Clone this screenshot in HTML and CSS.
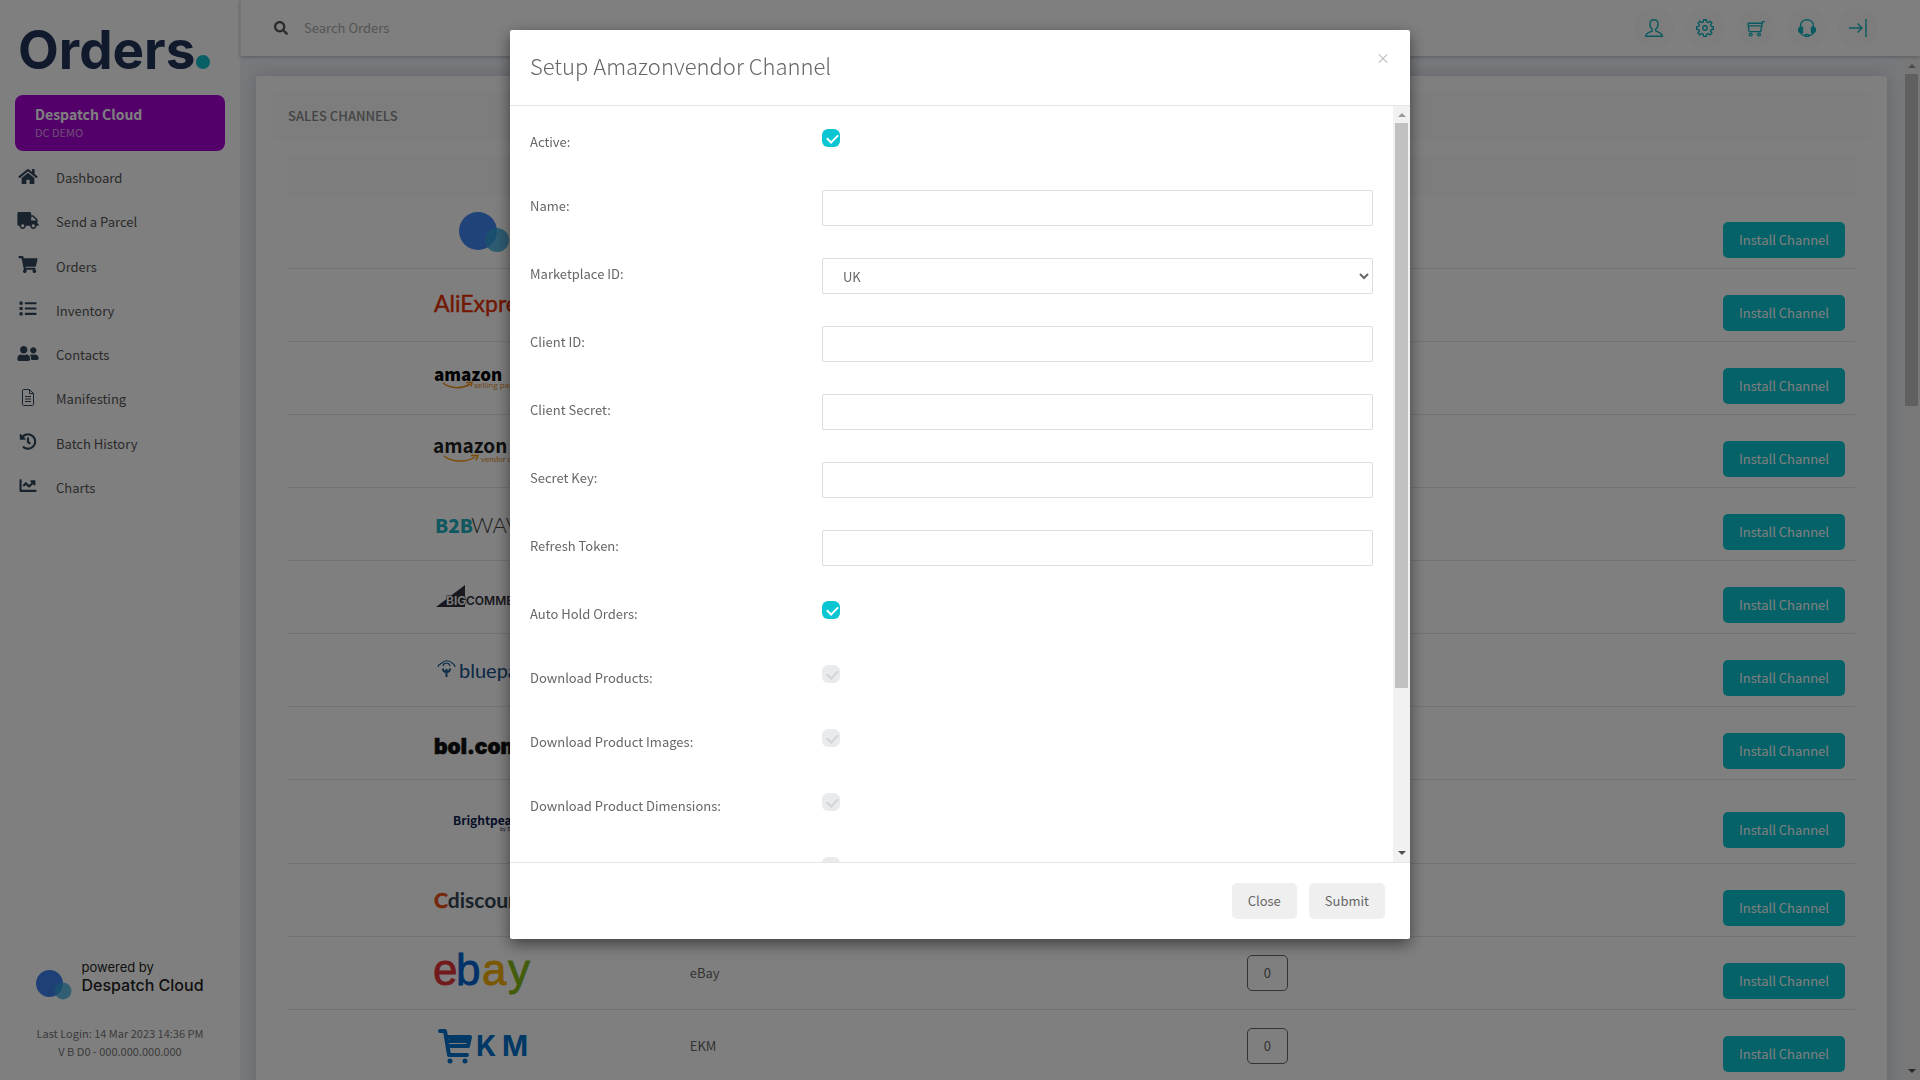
FILE: index.html
```html
<!DOCTYPE html>
<html lang="en">
<head>
  <meta charset="UTF-8">
  <meta name="viewport" content="width=device-width, initial-scale=1.0">
  <title>Sales Channels</title>
  <link rel="stylesheet" href="styles.css">
</head>
<body>
  <div class="app">

    <!-- Sidebar -->
    <aside class="sidebar">
      <div class="brand">Orders<span class="brand-dot"></span></div>
      <div class="company">
        <strong>Despatch Cloud</strong>
        <span>DC DEMO</span>
      </div>
      <nav class="menu">
        <a href="#"><svg viewBox="0 0 576 512"><path d="M280.37 148.26L96 300.11V464a16 16 0 0 0 16 16l112.06-.29a16 16 0 0 0 15.92-16V368a16 16 0 0 1 16-16h64a16 16 0 0 1 16 16v95.64a16 16 0 0 0 16 16.05L464 480a16 16 0 0 0 16-16V300L295.67 148.26a12.19 12.19 0 0 0-15.3 0zM571.6 251.47L488 182.56V44.05a12 12 0 0 0-12-12h-56a12 12 0 0 0-12 12v72.61L318.47 43a48 48 0 0 0-61 0L4.34 251.47a12 12 0 0 0-1.6 16.9l25.5 31A12 12 0 0 0 45.15 301l235.22-193.74a12.19 12.19 0 0 1 15.3 0L530.9 301a12 12 0 0 0 16.9-1.6l25.5-31a12 12 0 0 0-1.7-16.93z"/></svg>Dashboard</a>
        <a href="#"><svg viewBox="0 0 640 512"><path d="M624 352h-16V243.9c0-12.7-5.1-24.9-14.1-33.9L494 110.1c-9-9-21.2-14.1-33.9-14.1H416V48c0-26.5-21.5-48-48-48H48C21.5 0 0 21.5 0 48v320c0 26.5 21.5 48 48 48h16c0 53 43 96 96 96s96-43 96-96h128c0 53 43 96 96 96s96-43 96-96h48c8.8 0 16-7.2 16-16v-32c0-8.8-7.2-16-16-16zM160 464c-26.5 0-48-21.5-48-48s21.5-48 48-48 48 21.5 48 48-21.5 48-48 48zm320 0c-26.5 0-48-21.5-48-48s21.5-48 48-48 48 21.5 48 48-21.5 48-48 48zm80-208H416V144h44.1l99.9 99.9V256z"/></svg>Send a Parcel</a>
        <a href="#"><svg viewBox="0 0 576 512"><path d="M528.12 301.319l47.273-208C578.806 78.301 567.391 64 551.99 64H159.208l-9.166-44.81C147.758 8.021 137.93 0 126.529 0H24C10.745 0 0 10.745 0 24v16c0 13.255 10.745 24 24 24h69.883l70.248 343.435C147.325 417.1 136 435.222 136 456c0 30.928 25.072 56 56 56s56-25.072 56-56c0-15.674-6.447-29.835-16.824-40h209.647C430.447 426.165 424 440.326 424 456c0 30.928 25.072 56 56 56s56-25.072 56-56c0-22.172-12.888-41.332-31.579-50.405l5.517-24.276c3.413-15.018-8.002-29.319-23.403-29.319H218.117l-6.545-32h293.145c11.206 0 20.92-7.754 23.403-18.681z"/></svg>Orders</a>
        <a href="#"><svg viewBox="0 0 512 512"><path d="M16 48h64a16 16 0 0 1 16 16v64a16 16 0 0 1-16 16H16a16 16 0 0 1-16-16V64a16 16 0 0 1 16-16zm0 160h64a16 16 0 0 1 16 16v64a16 16 0 0 1-16 16H16a16 16 0 0 1-16-16v-64a16 16 0 0 1 16-16zm0 160h64a16 16 0 0 1 16 16v64a16 16 0 0 1-16 16H16a16 16 0 0 1-16-16v-64a16 16 0 0 1 16-16zM176 64h320a16 16 0 0 1 16 16v32a16 16 0 0 1-16 16H176a16 16 0 0 1-16-16V80a16 16 0 0 1 16-16zm0 160h320a16 16 0 0 1 16 16v32a16 16 0 0 1-16 16H176a16 16 0 0 1-16-16v-32a16 16 0 0 1 16-16zm0 160h320a16 16 0 0 1 16 16v32a16 16 0 0 1-16 16H176a16 16 0 0 1-16-16v-32a16 16 0 0 1 16-16z"/></svg>Inventory</a>
        <a href="#"><svg viewBox="0 0 640 512"><path d="M192 256c61.9 0 112-50.1 112-112S253.9 32 192 32 80 82.1 80 144s50.1 112 112 112zm76.8 32h-8.3c-20.8 10-43.9 16-68.5 16s-47.6-6-68.5-16h-8.3C51.6 288 0 339.6 0 403.2V432c0 26.5 21.5 48 48 48h288c26.5 0 48-21.5 48-48v-28.8c0-63.6-51.6-115.2-115.2-115.2zM480 256c53 0 96-43 96-96s-43-96-96-96-96 43-96 96 43 96 96 96zm48 32h-3.8c-13.9 4.8-28.6 8-44.2 8s-30.3-3.2-44.2-8H432c-20.4 0-39.2 5.9-55.7 15.4 24.4 26.3 39.7 61.2 39.7 99.8v38.4c0 2.2-.5 4.3-.6 6.4H592c26.5 0 48-21.5 48-48 0-61.9-50.1-112-112-112z"/></svg>Contacts</a>
        <a href="#"><svg viewBox="0 0 17 17"><path class="line" d="M4 .5h6l4 4V15.500a1 1 0 0 1-1 1H4a1 1 0 0 1-1-1V1.500a1 1 0 0 1 1-1zM10 .5v4h4M5.500 7.500h6M5.500 10h6M5.500 12.500h6"/></svg>Manifesting</a>
        <a href="#"><svg viewBox="0 0 512 512"><path d="M504 255.531c.253 136.64-111.18 248.372-247.82 248.468-59.015.042-113.223-20.53-155.822-54.911-11.077-8.94-11.905-25.541-1.839-35.607l11.267-11.267c8.609-8.609 22.353-9.551 31.891-1.984C173.062 425.135 212.781 440 256 440c101.705 0 184-82.311 184-184 0-101.705-82.311-184-184-184-48.814 0-93.149 18.969-126.068 49.932l50.754 50.754c10.08 10.08 2.941 27.314-11.313 27.314H24c-8.837 0-16-7.163-16-16V38.627c0-14.254 17.234-21.393 27.314-11.314l49.372 49.372C129.209 34.136 189.552 8 256 8c136.81 0 247.747 110.78 248 247.531zm-180.912 78.784l9.823-12.63c8.138-10.463 6.253-25.542-4.21-33.679L288 256.349V152c0-13.255-10.745-24-24-24h-16c-13.255 0-24 10.745-24 24v135.651l65.409 50.874c10.463 8.137 25.541 6.253 33.679-4.21z"/></svg>Batch History</a>
        <a href="#"><svg viewBox="0 0 512 512"><path d="M496 384H64V80c0-8.84-7.16-16-16-16H16C7.16 64 0 71.16 0 80v336c0 17.67 14.33 32 32 32h464c8.84 0 16-7.16 16-16v-32c0-8.84-7.16-16-16-16zM464 96H345.94c-21.38 0-32.09 25.85-16.97 40.97l32.4 32.4L288 242.75l-73.37-73.37c-12.5-12.5-32.76-12.5-45.25 0l-68.69 68.69c-6.25 6.25-6.25 16.38 0 22.63l22.62 22.62c6.25 6.25 16.38 6.25 22.63 0L192 237.25l73.37 73.37c12.5 12.5 32.76 12.5 45.25 0l96-96 32.4 32.4c15.12 15.12 40.97 4.41 40.97-16.97V112c.01-8.84-7.15-16-15.99-16z"/></svg>Charts</a>
      </nav>
      <div class="sidebar-footer">
        <div class="powered">
          <svg width="36" height="30" viewBox="0 0 36 30"><circle cx="13.500" cy="13.500" r="13.500" fill="#3f80ec"/><circle cx="27" cy="21" r="8.500" fill="#32a5dc" fill-opacity=".75"/></svg>
          <div class="powered-text"><span>powered by</span><b>Despatch Cloud</b></div>
        </div>
        <p>Last Login: 14 Mar 2023 14:36 PM</p>
        <p>V B D0 - 000.000.000.000</p>
      </div>
    </aside>

    <div class="page">

      <!-- Top bar -->
      <header class="topbar">
        <label class="search">
          <svg width="14" height="14" viewBox="0 0 512 512"><path d="M505 442.7L405.3 343c-4.5-4.5-10.6-7-17-7H372c27.6-35.3 44-79.7 44-128C416 93.1 322.9 0 208 0S0 93.1 0 208s93.1 208 208 208c48.3 0 92.700-16.4 128-44v16.3c0 6.4 2.5 12.5 7 17l99.7 99.7c9.4 9.4 24.6 9.4 33.9 0l28.3-28.3c9.4-9.4 9.4-24.6.1-34zM208 336c-70.7 0-128-57.2-128-128 0-70.7 57.2-128 128-128 70.7 0 128 57.2 128 128 0 70.7-57.2 128-128 128z"/></svg>
          <input type="text" placeholder="Search Orders" aria-label="Search Orders">
        </label>
        <div class="top-icons">
          <a href="#" aria-label="Account"><svg viewBox="0 0 18 18"><path d="M9 .7c-2.500 0-4 1.700-4 4.200 0 2.300 1 4.400 2.300 5.200v1.700c-1 1.200-6.600 1.500-6.600 5.500h16.600c0-4-5.600-4.300-6.600-5.500v-1.700c1.300-.8 2.300-2.900 2.300-5.200 0-2.500-1.500-4.200-4-4.200z"/></svg></a>
          <a href="#" aria-label="Settings"><svg viewBox="0 0 18 18"><path d="M7.700.7h2.600l.4 2.200 1.500.6 1.900-1.300 1.800 1.800-1.300 1.900.6 1.500 2.200.4v2.500l-2.200.4-.6 1.500 1.300 1.900-1.800 1.800-1.900-1.300-1.500.6-.4 2.200H7.700l-.4-2.200-1.500-.6-1.900 1.300-1.800-1.800 1.300-1.900-.6-1.500-2.200-.4V7.800l2.200-.4.6-1.500-1.300-1.900 1.800-1.800 1.900 1.300 1.500-.6z"/><circle cx="9" cy="9" r="2.200"/></svg></a>
          <a href="#" aria-label="Basket"><svg viewBox="0 0 18 18"><path d="M18 2.600h-2.500l-1.800 10H2.700M.7 4.300h14.200M.9 4.300l1.200 8.300M1.500 6.900h13"/><circle cx="3.700" cy="15.500" r="1.400"/><circle cx="12" cy="15.500" r="1.400"/></svg></a>
          <a href="#" aria-label="Support"><svg viewBox="0 0 18 18"><path d="M2.600 8V6.500c0-3.400 2.900-5.800 6.400-5.800s6.400 2.400 6.400 5.800V8M2.600 13c.3 2.400 2 3.500 4.400 3.500M15.400 13c-.3 2.400-2 3.500-4.400 3.500"/><path class="solid" d="M2.600 8.200l1.900.2v5.200l-1.900.2C1 13.300.5 12 .5 11s.6-2.300 2.100-2.800zM15.400 8.200l-1.900.2v5.200l1.900.2c1.600-.5 2.100-1.800 2.100-2.800s-.6-2.300-2.100-2.800z"/><rect x="7" y="15.500" width="4" height="2" rx="1"/></svg></a>
          <a href="#" aria-label="Log out"><svg viewBox="0 0 18 18"><path d="M0 9h13M8.500 4.500L13 9l-4.500 4.500M17 0v18"/></svg></a>
        </div>
      </header>

      <div class="page-body">
        <main class="content">
          <div class="card">
            <h2 class="card-title">SALES CHANNELS</h2>
            <table class="channels">
              <thead>
                <tr><th></th><th></th><th></th><th></th></tr>
              </thead>
              <tbody>
                <tr>
                  <td class="logo"><svg width="100" height="40"><circle cx="44" cy="19" r="19" fill="#4189f5"/><circle cx="63" cy="28" r="12" fill="#32a5dc" fill-opacity=".8"/></svg></td>
                  <td>Despatch Cloud</td>
                  <td class="count"><button>0</button></td>
                  <td class="action"><button class="btn-install">Install Channel</button></td>
                </tr>
                <tr>
                  <td class="logo"><svg width="100" height="40"><text x="0" y="27" font-family="Lato" font-size="23" font-weight="400" fill="#e62e04" stroke="#e62e04" stroke-width=".4">AliExpress</text></svg></td>
                  <td>AliExpress</td>
                  <td class="count"><button>0</button></td>
                  <td class="action"><button class="btn-install">Install Channel</button></td>
                </tr>
                <tr>
                  <td class="logo"><svg width="100" height="40"><text x="0" y="23" font-family="Noto Sans CJK SC" font-size="17" font-weight="900" fill="#000">amazon</text><path d="M9 25c8 6 19 6 27 1M32 24.500h6l-1 4" fill="none" stroke="#f08c10" stroke-width="1.500"/><text x="40" y="30" font-family="Open Sans" font-size="8" fill="#e08a1c">selling partner</text></svg></td>
                  <td>Amazon</td>
                  <td class="count"><button>0</button></td>
                  <td class="action"><button class="btn-install">Install Channel</button></td>
                </tr>
                <tr>
                  <td class="logo"><svg width="100" height="40"><text x="-1" y="22" font-family="Noto Sans CJK SC" font-size="19" font-weight="700" fill="#221f1f">amazon</text><path d="M10 25c8 6 22 7 31 1M37 24.500h7l-2 5" fill="none" stroke="#f79400" stroke-width="1.500"/><text x="47" y="31" font-family="Lato" font-size="8" fill="#e08a1c">vendor central</text></svg></td>
                  <td>Amazon Vendor</td>
                  <td class="count"><button>0</button></td>
                  <td class="action"><button class="btn-install">Install Channel</button></td>
                </tr>
                <tr>
                  <td class="logo"><svg width="100" height="40"><text x="1" y="29" font-family="Noto Sans CJK SC" font-size="19" font-weight="900" fill="#1fb0c0">B2B</text><text x="37" y="29" font-family="Lato" font-size="22" font-weight="300" fill="#444">WAVE</text></svg></td>
                  <td>B2B Wave</td>
                  <td class="count"><button>0</button></td>
                  <td class="action"><button class="btn-install">Install Channel</button></td>
                </tr>
                <tr>
                  <td class="logo"><svg width="100" height="40"><path d="M2 30L31 8v22z" fill="#34313f"/><text x="12" y="28" font-family="Inter" font-size="12" font-weight="600" fill="#fff" stroke="#34313f" stroke-width="1" paint-order="stroke">BIG</text><text x="32" y="28" font-family="Inter" font-size="12" font-weight="600" fill="#34313f">COMMERCE</text></svg></td>
                  <td>BigCommerce</td>
                  <td class="count"><button>0</button></td>
                  <td class="action"><button class="btn-install">Install Channel</button></td>
                </tr>
                <tr>
                  <td class="logo"><svg width="100" height="40"><path d="M4 17c0-3 3-3 4-4 2-3 8-3 10 0 1 1 3 1 3 4M9 16c1-4 6-4 7 0" fill="none" stroke="#1c5a92" stroke-width="1.200"/><path d="M12.500 27v-8M9 18.500c0 3 1.500 3.500 3.500 3.500s3.500-.5 3.500-3.500" fill="none" stroke="#1c5a92" stroke-width="2"/><text x="25" y="28" font-family="Lato" font-size="20" fill="#15508c">bluepark</text></svg></td>
                  <td>Bluepark</td>
                  <td class="count"><button>0</button></td>
                  <td class="action"><button class="btn-install">Install Channel</button></td>
                </tr>
                <tr>
                  <td class="logo"><svg width="100" height="40"><text x="0" y="31" font-family="Inter" font-size="21" font-weight="900" fill="#111" stroke="#111" stroke-width=".6">bol.com</text></svg></td>
                  <td>Bol.com</td>
                  <td class="count"><button>0</button></td>
                  <td class="action"><button class="btn-install">Install Channel</button></td>
                </tr>
                <tr class="tall">
                  <td class="logo"><svg width="100" height="40"><text x="19" y="23" font-family="Noto Sans CJK SC" font-size="12" font-weight="700" fill="#0c1c52">Brightpearl</text><text x="66" y="29" font-family="Inter" font-size="5" fill="#0c1c52">by Sage</text></svg></td>
                  <td>Brightpearl</td>
                  <td class="count"><button>0</button></td>
                  <td class="action"><button class="btn-install">Install Channel</button></td>
                </tr>
                <tr>
                  <td class="logo"><svg width="100" height="40"><text x="0" y="28" font-family="Lato" font-size="21" font-weight="700" fill="#344656"><tspan fill="#ec4e14" stroke="#ec4e14" stroke-width=".6">C</tspan>discount</text></svg></td>
                  <td>Cdiscount</td>
                  <td class="count"><button>0</button></td>
                  <td class="action"><button class="btn-install">Install Channel</button></td>
                </tr>
                <tr>
                  <td class="logo"><svg width="100" height="40"><text y="32" font-family="Liberation Sans" font-size="44" stroke-width=".8"><tspan x="-1" fill="#e53238" stroke="#e53238">e</tspan><tspan x="22" fill="#0064d2" stroke="#0064d2">b</tspan><tspan x="48" fill="#f5af02" stroke="#f5af02">a</tspan><tspan x="74" fill="#86b817" stroke="#86b817">y</tspan></text></svg></td>
                  <td>eBay</td>
                  <td class="count"><button>0</button></td>
                  <td class="action"><button class="btn-install">Install Channel</button></td>
                </tr>
                <tr>
                  <td class="logo"><svg width="100" height="40"><path d="M6 5h5l4 24h18M13 11h23l-2 9H14M16 15h18" fill="none" stroke="#0070cc" stroke-width="4" stroke-linecap="round" stroke-linejoin="round"/><circle cx="16" cy="35" r="2.500" fill="#0070cc"/><circle cx="31" cy="35" r="2.500" fill="#0070cc"/><text y="30" font-family="Inter" font-size="28" font-weight="700" fill="#0070cc"><tspan x="42">K</tspan><tspan x="68">M</tspan></text></svg></td>
                  <td>EKM</td>
                  <td class="count"><button>0</button></td>
                  <td class="action"><button class="btn-install">Install Channel</button></td>
                </tr>
              </tbody>
            </table>
          </div>
        </main>
        <div class="scrollbar"><i class="up"></i><span class="thumb thumb-page"></span><i class="down"></i></div>
      </div>
    </div>
  </div>

  <!-- Channel setup modal -->
  <div class="backdrop">
    <form class="modal" role="dialog" aria-labelledby="modal-title">
      <div class="modal-header">
        <h1 id="modal-title">Setup Amazonvendor Channel</h1>
        <button type="button" class="close" aria-label="Close dialog">&times;</button>
      </div>
      <div class="modal-body">
        <div class="fields">
          <div class="field check"><label for="active">Active:</label><input type="checkbox" id="active" checked></div>
          <div class="field"><label for="name">Name:</label><input type="text" id="name"></div>
          <div class="field"><label for="marketplace">Marketplace ID:</label><select id="marketplace"><option>UK</option><option>DE</option><option>FR</option></select></div>
          <div class="field"><label for="client-id">Client ID:</label><input type="text" id="client-id"></div>
          <div class="field"><label for="client-secret">Client Secret:</label><input type="text" id="client-secret"></div>
          <div class="field"><label for="secret-key">Secret Key:</label><input type="text" id="secret-key"></div>
          <div class="field"><label for="refresh-token">Refresh Token:</label><input type="text" id="refresh-token"></div>
          <div class="field check"><label for="auto-hold">Auto Hold Orders:</label><input type="checkbox" id="auto-hold" checked></div>
          <div class="field check"><label for="products">Download Products:</label><input type="checkbox" id="products"></div>
          <div class="field check"><label for="images">Download Product Images:</label><input type="checkbox" id="images"></div>
          <div class="field check"><label for="dimensions">Download Product Dimensions:</label><input type="checkbox" id="dimensions"></div>
          <div class="field check"><span></span><input type="checkbox" aria-label="Download Product Weights"></div>
        </div>
        <div class="scrollbar"><i class="up"></i><span class="thumb thumb-modal"></span><i class="down"></i></div>
      </div>
      <div class="modal-footer">
        <button type="button">Close</button>
        <button type="submit">Submit</button>
      </div>
    </form>
  </div>
</body>
</html>
```
FILE: styles.css
```css
* {
  box-sizing: border-box;
}

body {
  margin: 0;
  font-family: "Noto Sans CJK SC", "Noto Sans", sans-serif;
  font-size: 13px;
  line-height: 20px;
  color: #666;
  overflow: hidden;
}

button, input, select {
  font: inherit;
  color: inherit;
}

a {
  color: inherit;
  text-decoration: none;
}

.app {
  display: flex;
  height: 100vh;
}

/* Sidebar */
.sidebar {
  width: 240px;
  flex: none;
  display: flex;
  flex-direction: column;
  background: #fff;
  color: #555;
}

.brand {
  display: flex;
  align-items: baseline;
  height: 95px;
  padding: 20px 0 0 18px;
  font-family: Inter, sans-serif;
  font-size: 53px;
  font-weight: 700;
  line-height: 60px;
  color: #22355a;
}

.brand-dot {
  width: 14px;
  height: 14px;
  margin-left: 1px;
  border-radius: 50%;
  background: #0cc0cc;
}

.company {
  display: flex;
  flex-direction: column;
  height: 56px;
  margin: 0 15px;
  padding: 9px 20px;
  border-radius: 8px;
  background: #a800d6;
  color: #fff;
}

.company strong {
  font-size: 14px;
}

.company span {
  font-size: 11px;
  line-height: 16px;
  opacity: .6;
}

.menu {
  display: grid;
  grid-auto-rows: 1fr;
  height: 354px;
  margin-top: 5px;
}

.menu a {
  display: flex;
  align-items: center;
}

.menu svg {
  width: 56px;
  height: 17px;
  margin-bottom: 4px;
  fill: #30475a;
}

.menu .line {
  fill: none;
  stroke: #30475a;
}

.sidebar-footer {
  margin-top: auto;
  padding-bottom: 20px;
  text-align: center;
  font-size: 11px;
  line-height: 18px;
  color: #777;
}

.sidebar-footer p {
  margin: 0;
}

.powered {
  display: flex;
  align-items: flex-end;
  justify-content: center;
  gap: 9px;
  margin-bottom: 24px;
}

.powered-text {
  display: flex;
  flex-direction: column;
  padding-bottom: 6px;
  text-align: left;
  font-family: Inter, sans-serif;
  font-size: 13px;
  color: #222;
}

.powered-text b {
  font-size: 16px;
  font-weight: 500;
}

/* Page */
.page {
  flex: 1;
  min-width: 0;
  display: flex;
  flex-direction: column;
}

.topbar {
  position: relative;
  display: flex;
  justify-content: space-between;
  flex: none;
  height: 56px;
  padding: 0 42px 0 33px;
  background: #fff;
  border-left: 1px solid #e6e9f0;
  box-shadow: 0 1px 3px rgba(60, 60, 100, .4);
}

.search {
  display: flex;
  align-items: center;
  gap: 14px;
}

.search svg {
  fill: #555;
}

.search input {
  width: 300px;
  border: 0;
  background: none;
  outline: none;
}

.search input::placeholder {
  color: #aaa;
}

.top-icons {
  display: flex;
  align-items: center;
  gap: 11px;
}

.top-icons a {
  display: flex;
  align-items: center;
  justify-content: center;
  width: 40px;
  height: 40px;
  border-radius: 50%;
  background: #fafafa;
}

.top-icons svg {
  width: 18px;
  height: 18px;
  fill: none;
  stroke: #12b5c0;
  stroke-width: 1.4;
}

.top-icons .solid {
  fill: #12b5c0;
}

.page-body {
  display: flex;
  flex: 1;
  min-height: 0;
  padding-top: 1px;
}

.content {
  flex: 1;
  min-width: 0;
  padding: 19px 16px 0;
  overflow: hidden;
  background: #eff2f8;
}

.card {
  padding: 16px 16px 40px;
  border-radius: 3px;
  background: #fff;
  box-shadow: 0 0 16px rgba(70, 80, 110, .25);
}

.card-title {
  margin: 0 0 16px;
  padding: 14px 16px;
  border-radius: 6px;
  background: #fafafa;
  font-size: 13px;
  font-weight: 500;
  line-height: 20px;
  color: #888;
}

.channels {
  width: calc(100% - 32px);
  margin: 0 16px;
  table-layout: fixed;
  border-spacing: 0;
}

.channels th {
  height: 40px;
  padding: 0;
  background: #fafafa;
}

.channels td {
  height: 73px;
  padding: 0 10px;
  border-bottom: 1px solid #e4e6ea;
}

.channels .tall td {
  height: 84px;
}

.channels .logo {
  text-align: center;
}

.channels .logo svg {
  display: block;
  margin: 0 auto;
  overflow: visible;
}

.channels .count {
  text-align: center;
}

.count button {
  width: 41px;
  height: 36px;
  border: 1px solid #666;
  border-radius: 5px;
  background: none;
}

.channels .action {
  padding-top: 16px;
  text-align: right;
}

.btn-install {
  height: 36px;
  padding: 0 16px;
  border: 0;
  border-radius: 5px;
  background: #08c4d0;
  color: #fff;
}

/* Scrollbars */
.scrollbar {
  display: flex;
  flex-direction: column;
  align-items: center;
  flex: none;
  width: 17px;
  background: #f1f1f1;
}

.scrollbar i {
  width: 0;
  height: 0;
  margin: 6px 0;
  border: 4px solid transparent;
}

.scrollbar .up {
  margin-top: 7px;
  border-top: 0;
  border-bottom: 4px solid #999;
}

.scrollbar .down {
  margin-top: auto;
  margin-bottom: 7px;
  border-bottom: 0;
  border-top: 4px solid #505050;
}

.thumb {
  width: 13px;
  background: #c1c1c1;
}

.thumb-page {
  height: calc(33% - 6px);
}

.thumb-modal {
  height: calc(75% - 2px);
}

/* Modal */
.backdrop {
  position: fixed;
  inset: 0;
  display: flex;
  align-items: flex-start;
  justify-content: center;
  padding-top: 30px;
  background: rgba(0, 0, 0, .5);
}

.modal {
  width: 900px;
  border-radius: 2px;
  background: #fff;
  box-shadow: 0 5px 15px rgba(0, 0, 0, .5);
}

.modal-header {
  display: flex;
  justify-content: space-between;
  align-items: flex-start;
  padding: 17px 20px 22px;
  border-bottom: 1px solid #e5e5e5;
}

.modal-header h1 {
  margin: 0;
  font-size: 22px;
  font-weight: 200;
  line-height: 36px;
}

.close {
  padding: 0;
  border: 0;
  background: none;
  font-size: 14px;
  line-height: 20px;
  color: #bbb;
}

.modal-body {
  display: flex;
  height: calc(100vh - 324px);
  overflow: hidden;
}

.fields {
  flex: 1;
  padding: 4px 20px 0;
}

.field {
  display: grid;
  grid-template-columns: 292px 1fr;
  align-items: start;
  height: 68px;
  padding-top: 16px;
}

.field label {
  padding-top: 6px;
}

.field input[type="text"],
.field select {
  width: 100%;
  height: 36px;
  padding: 0 16px;
  border: 1px solid #ddd;
  border-radius: 2px;
  background: #fff;
}

.check {
  height: 64px;
}

.check input {
  appearance: none;
  width: 18px;
  height: 18px;
  margin: 3px 0 0;
  border-radius: 6px;
  background: #e9eaec;
}

.check input::after {
  content: "";
  display: block;
  width: 9px;
  height: 5px;
  margin: 5px 0 0 5px;
  border-left: 2px solid #d2d3d5;
  border-bottom: 2px solid #d2d3d5;
  transform: rotate(-45deg);
}

.check input:checked {
  background: #0ac6d2;
}

.check input:checked::after {
  border-color: #fff;
}

.modal-footer {
  display: flex;
  justify-content: flex-end;
  gap: 12px;
  padding: 20px 25px;
  border-top: 1px solid #e5e5e5;
}

.modal-footer button {
  height: 36px;
  padding: 0 16px;
  border: 0;
  border-radius: 5px;
  background: #efefef;
}
```
